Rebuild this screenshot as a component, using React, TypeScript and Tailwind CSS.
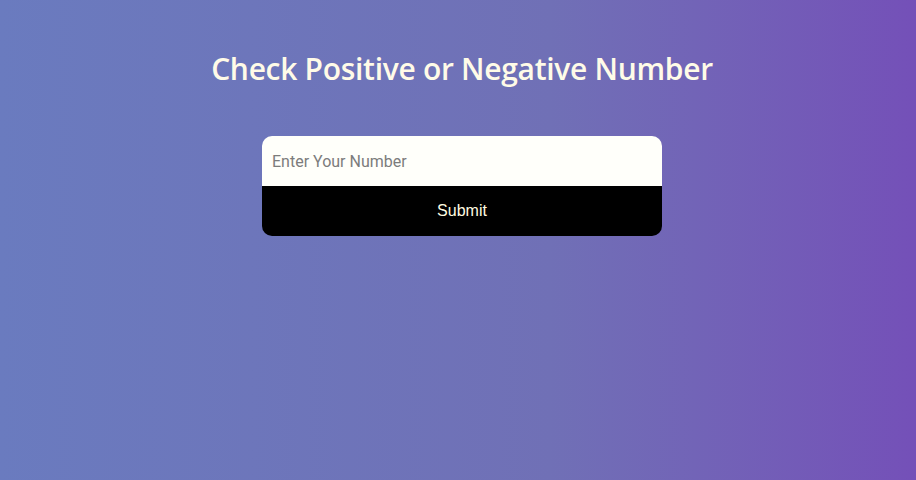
export default function App() {
  return (
    <div className="min-h-screen w-full pl-[8px] bg-gradient-to-r from-[#6a7bbf] via-[#7070b6] via-60% to-[#7450b8] flex flex-col items-center">
      <h1 className="mt-[49px] text-[30px] leading-[40px] font-semibold text-[#fffbe8] tracking-[-0.3px] [font-family:'Open_Sans',Inter,sans-serif]">
        Check Positive or Negative Number
      </h1>
      <form
        className="mt-[47px] w-[400px] rounded-[10px] overflow-hidden flex flex-col"
        onSubmit={(e) => e.preventDefault()}
      >
        <input
          type="number"
          placeholder="Enter Your Number"
          className="h-[50px] w-full bg-[#fffffa] px-[10px] text-[16px] text-gray-700 placeholder:text-[#7c7c7c] outline-none [font-family:Roboto,sans-serif]"
        />
        <button
          type="submit"
          className="h-[50px] w-full bg-black text-[#fffbe0] text-[16px] [font-family:'Liberation_Sans',Arial,sans-serif]"
        >
          Submit
        </button>
      </form>
    </div>
  );
}
